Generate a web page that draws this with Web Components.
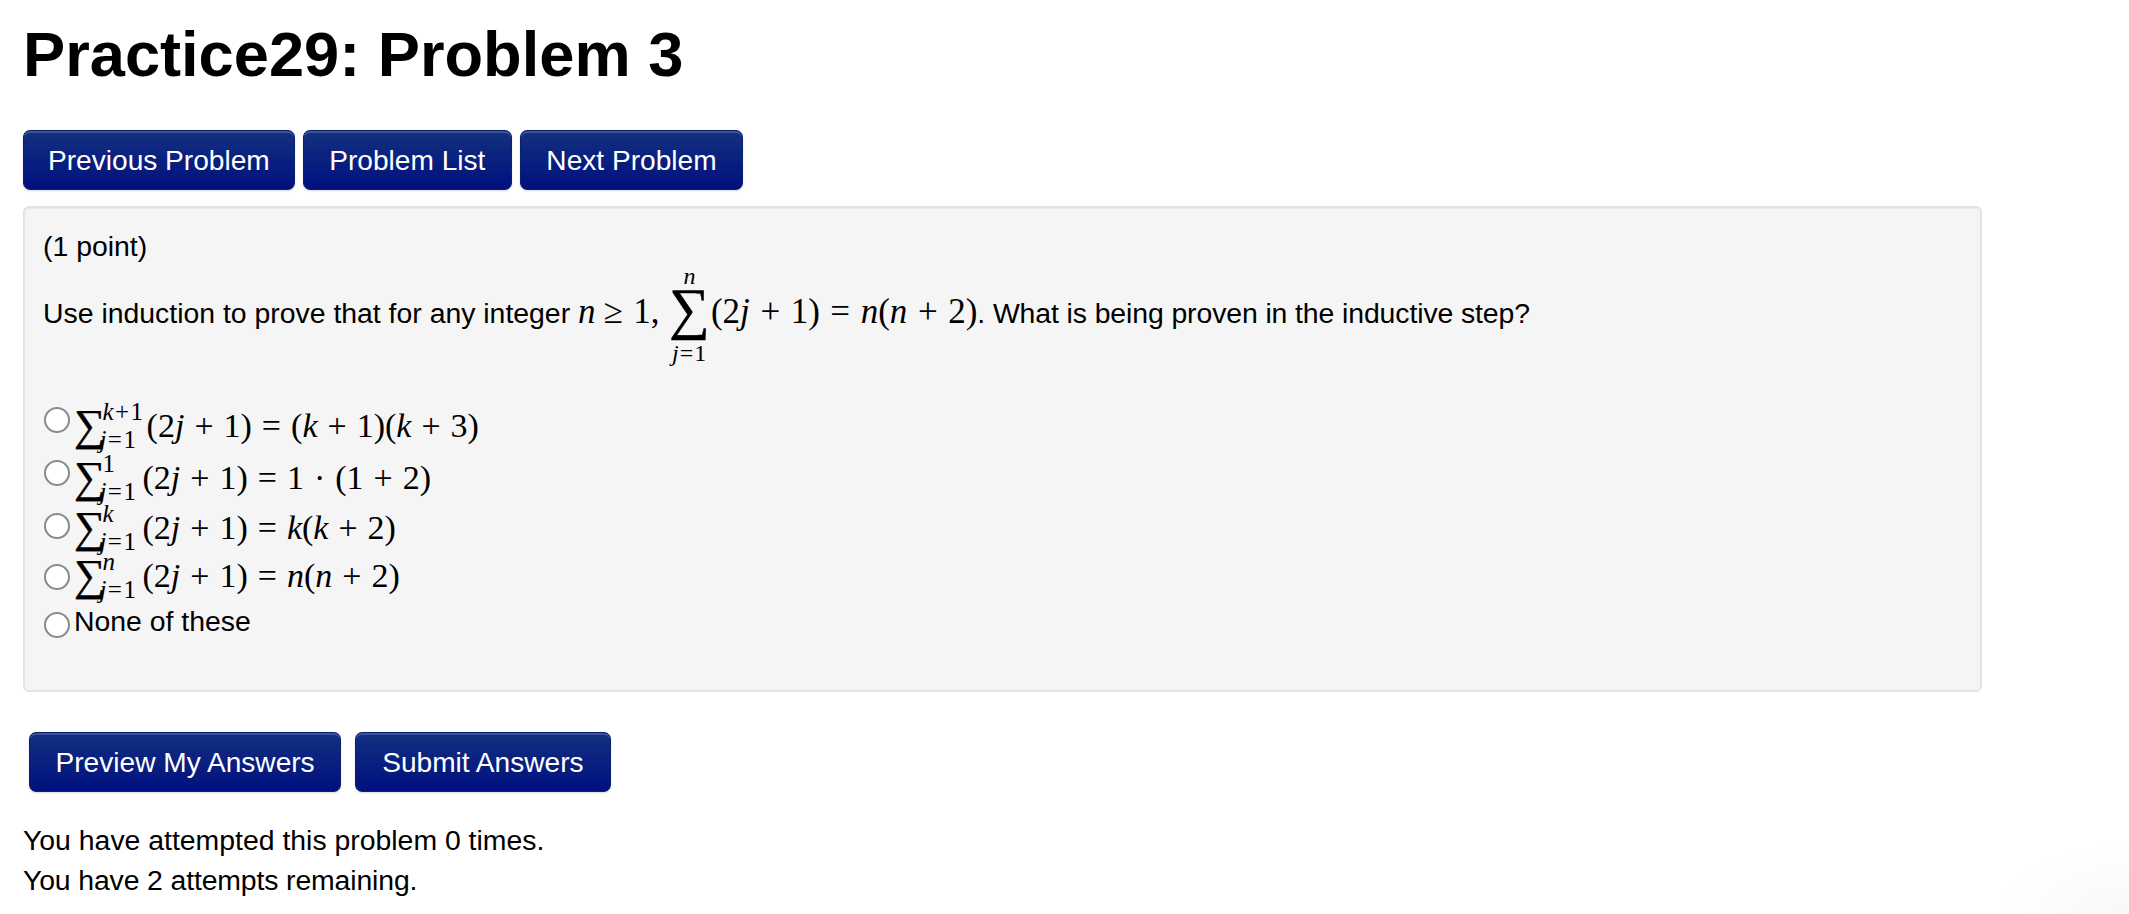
<!DOCTYPE html>
<html>
<head>
<meta charset="utf-8">
<title>Practice29: Problem 3</title>
<style>
  html, body { height: 100%; }
  body {
    margin: 0;
    padding: 0 23px;
    box-sizing: border-box;
    overflow: hidden;
    font-family: "Liberation Sans", Arial, sans-serif;
    font-size: 28.4px;
    color: #000;
    background: radial-gradient(130px 70px at 100% 100%, #f8f8f8, #fff) #fff;
  }
</style>
</head>
<body>
<page-title>Practice29: Problem 3</page-title>
<nav-buttons>
  <ww-button style="--pad:24px">Previous Problem</ww-button>
  <ww-button style="--pad:25.5px">Problem List</ww-button>
  <ww-button style="--pad:25.5px">Next Problem</ww-button>
</nav-buttons>
<problem-panel>
  <point-label>(1 point)</point-label>
  <problem-statement>Use induction to prove that for any integer <m-i>n</m-i> <m-r>≥ 1,</m-r> <big-sum over="n" under="j=1"></big-sum><m-r>(2<m-i>j</m-i> + 1) = <m-i>n</m-i>(<m-i>n</m-i> + 2)</m-r><span style="letter-spacing:-.1px">. What is being proven in the inductive step?</span></problem-statement>
  <choice-list>
    <choice-row style="--h:52px;--up:12px"><small-sum over="k+1" under="j=1"></small-sum><m-r>(2<m-i>j</m-i> + 1) = (<m-i>k</m-i> + 1)(<m-i>k</m-i> + 3)</m-r></choice-row>
    <choice-row style="--h:51px;--up:10px"><small-sum over="1" under="j=1"></small-sum><m-r>(2<m-i>j</m-i> + 1) = 1 · (1 + 2)</m-r></choice-row>
    <choice-row style="--h:50px;--up:4px"><small-sum over="k" under="j=1"></small-sum><m-r>(2<m-i>j</m-i> + 1) = <m-i>k</m-i>(<m-i>k</m-i> + 2)</m-r></choice-row>
    <choice-row style="--h:46px;--up:-2px"><small-sum over="n" under="j=1"></small-sum><m-r>(2<m-i>j</m-i> + 1) = <m-i>n</m-i>(<m-i>n</m-i> + 2)</m-r></choice-row>
    <choice-row style="--h:44px;--up:-8px">None of these</choice-row>
  </choice-list>
</problem-panel>
<answer-buttons>
  <ww-button style="--pad:25.5px">Preview My Answers</ww-button>
  <ww-button style="--pad:26px">Submit Answers</ww-button>
</answer-buttons>
<attempt-info>
  <div>You have attempted this problem 0 times.</div>
  <div style="letter-spacing:-.13px">You have 2 attempts remaining.</div>
</attempt-info>

<script>
// small helper, most elements here are just a styled shadow root
function simple(name, css, html) {
  customElements.define(name, class extends HTMLElement {
    constructor() {
      super();
      this.attachShadow({ mode: 'open' });
      this.shadowRoot.innerHTML = `<style>${css}</style>${html || '<slot></slot>'}`;
    }
  });
}

const MATH_FONT = '"Liberation Serif", "Times New Roman", serif';

simple('page-title', `
  :host { display: block; height: 130px; padding-top: 24px; box-sizing: border-box; font-size: 63.2px; font-weight: bold; line-height: 60px; }
`);
simple('nav-buttons', `
  :host { display: flex; gap: 8px; height: 76px; }
`);
simple('answer-buttons', `
  :host { display: flex; gap: 14px; padding: 40px 0 0 6px; height: 60px; }
`);
simple('attempt-info', `
  :host { display: block; padding-top: 28px; line-height: 40px; }
`);
simple('ww-button', `
  :host {
    display: block;
    box-sizing: border-box;
    height: 60px;
    padding: 0 var(--pad, 25px);
    line-height: 59px;
    font-size: 28.1px;
    color: #fff;
    border-radius: 7px;
    background: linear-gradient(#13307f, #00107f);
    box-shadow: inset 0 2px 0 #3a5396, 0 1px 2px rgba(0,0,0,.15);
    border: 1px solid #0a2070;
  }
`);
simple('problem-panel', `
  :host {
    display: block;
    box-sizing: border-box;
    width: 1959px;
    height: 486px;
    padding: 22px 18px;
    background: #f5f5f5;
    border: 2px solid #e3e3e3;
    border-radius: 6px;
    box-shadow: inset 0 1px 1px rgba(0,0,0,.05);
  }
`);
simple('point-label', `
  :host { display: block; line-height: 32px; }
`);
simple('problem-statement', `
  :host { display: block; height: 108px; margin-top: -4px; line-height: 108px; white-space: nowrap; }
`);
simple('choice-list', `
  :host { display: block; margin-top: 34px; --math-size: 34px; --math-space: 1.5px; }
`);
simple('m-i', `
  :host { font-family: ${MATH_FONT}; font-style: italic; font-size: var(--math-size, 35px); }
`);
simple('m-r', `
  :host { font-family: ${MATH_FONT}; font-size: var(--math-size, 35px); word-spacing: var(--math-space, 1.8px); }
`);
simple('choice-row', `
  :host { display: flex; align-items: center; height: var(--h, 50px); }
  input {
    appearance: none; -webkit-appearance: none;
    box-sizing: border-box;
    flex: none;
    width: 26px; height: 26px;
    margin: 0 4px var(--up, 0) 1px;
    border: 2px solid #8a8a8a;
    border-radius: 50%;
    background: #fff;
  }
`, `<input type="radio" name="ans"><slot></slot>`);

class BigSum extends HTMLElement {
  constructor() {
    super();
    this.attachShadow({ mode: 'open' });
    this.shadowRoot.innerHTML = `
      <style>
        :host {
          display: inline-flex; flex-direction: column; align-items: center;
          vertical-align: middle;
          margin: -6px 1px 0 2px;
          font-family: ${MATH_FONT};
          font-size: 24px; line-height: 24px;
        }
        .over { height: 20px; font-style: italic; }
        .sym { height: 50px; font-size: 57px; line-height: 50px; -webkit-text-stroke: .5px #000; }
        .under { height: 28px; line-height: 39px; letter-spacing: 1px; }
      </style>
      <div class="over">${this.getAttribute('over')}</div>
      <div class="sym">∑</div>
      <div class="under"><i>j</i>=1</div>`;
  }
}
customElements.define('big-sum', BigSum);

class SmallSum extends HTMLElement {
  constructor() {
    super();
    this.attachShadow({ mode: 'open' });
    // only letters are italic in the limits, digits stay upright
    const over = this.getAttribute('over').replace(/[a-z]/, '<i>$&</i>');
    this.shadowRoot.innerHTML = `
      <style>
        :host {
          display: inline-flex; align-items: center;
          margin-right: 5px;
          font-family: ${MATH_FONT};
          font-size: 25px; line-height: 24px;
        }
        .sym { font-size: 44px; line-height: 40px; -webkit-text-stroke: .4px #000; }
        .lim { display: flex; flex-direction: column; margin-left: -6px; letter-spacing: 1.5px; }
        .over { padding-left: 3px; margin-right: -3px; height: 24px; line-height: 20px; }
        .under { height: 24px; line-height: 28px; }
      </style>
      <div class="sym">∑</div>
      <div class="lim">
        <div class="over">${over}</div>
        <div class="under"><i>j</i>=1</div>
      </div>`;
  }
}
customElements.define('small-sum', SmallSum);
</script>
</body>
</html>
